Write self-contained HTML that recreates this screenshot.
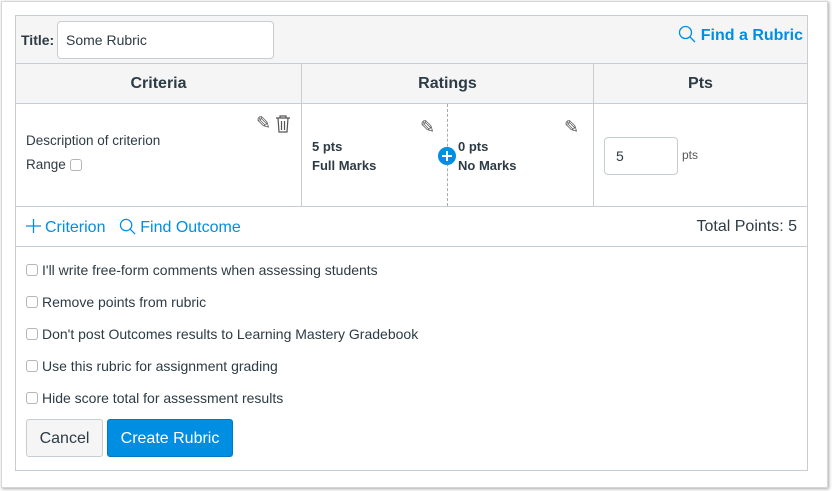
<!DOCTYPE html>
<html><head><style>
*{box-sizing:border-box;margin:0;padding:0}
body{width:834px;height:491px;background:#fff;font-family:"Liberation Sans",sans-serif;color:#2d3b45;position:relative;overflow:hidden}
.win{position:absolute;left:1px;top:1px;width:827px;height:487px;border:1px solid #d6d6d6;box-shadow:1px 1px 3px rgba(0,0,0,.35);background:#fff}
.box{position:absolute;left:15px;top:15px;width:793px;height:456px;border:1px solid #c7cdd1}
.abs{position:absolute}
.hdr{left:0;top:0;width:791px;height:48px;background:#f5f5f5;border-bottom:1px solid #c7cdd1}
.inp{background:#fff;border:1px solid #c7cdd1;border-radius:4px}
.th{top:48px;height:40px;background:#f5f5f5;border-bottom:1px solid #c7cdd1;font-weight:bold;font-size:16px;text-align:center;line-height:40px}
.blue{color:#008ee2}
.cb{display:inline-block;width:12px;height:12px;border:1px solid #b5b5b5;border-radius:3px;background:#fff;vertical-align:middle}
.opt{left:10px;font-size:14px;height:16px;line-height:16px}
.opt .cb{margin-right:4px;vertical-align:-1px}
.b{font-weight:bold;font-size:13px}
</style></head><body>
<div class="win"></div>
<div class="box">
 <div class="abs hdr">
  <div class="abs b" style="left:5px;top:16px;font-size:14px">Title:</div>
  <div class="abs inp" style="left:41px;top:5px;width:217px;height:38px;font-size:14px;padding:10px 0 0 8px">Some Rubric</div>
  <div class="abs blue" style="right:4px;top:9px;font-size:16px;font-weight:bold">
   <svg width="18" height="18" viewBox="0 0 18 18" style="vertical-align:-3px"><circle cx="7.5" cy="7.5" r="6" fill="none" stroke="#008ee2" stroke-width="1.3"/><path d="M12 12l5 5" stroke="#008ee2" stroke-width="1.3"/></svg> Find a Rubric</div>
 </div>
 <div class="abs th" style="left:0;width:286px;border-right:1px solid #c7cdd1">Criteria</div>
 <div class="abs th" style="left:286px;width:292px;border-right:1px solid #c7cdd1">Ratings</div>
 <div class="abs th" style="left:578px;width:213px">Pts</div>
 <div class="abs" style="left:0;top:88px;width:286px;height:103px;border-right:1px solid #c7cdd1;border-bottom:1px solid #c7cdd1">
  <div class="abs" style="left:10px;top:29px;font-size:13.5px">Description of criterion</div>
  <div class="abs" style="left:10px;top:53px;font-size:13.5px">Range <span class="cb"></span></div>
  <div class="abs" style="left:240px;top:9px;font-size:18px;color:#555">✎</div>
  <svg class="abs" style="left:259px;top:11px" width="16" height="18" viewBox="0 0 16 18"><path d="M1 3h14M5 3V1h6v2M3 3l1 14h8l1-14M6.5 6v9M9.5 6v9" fill="none" stroke="#555" stroke-width="1.2"/></svg>
 </div>
 <div class="abs" style="left:286px;top:88px;width:292px;height:103px;border-right:1px solid #c7cdd1;border-bottom:1px solid #c7cdd1">
  <div class="abs" style="left:145px;top:0;height:102px;border-left:1px dashed #aaa"></div>
  <div class="abs b" style="left:10px;top:35px">5 pts</div>
  <div class="abs b" style="left:10px;top:54px">Full Marks</div>
  <div class="abs b" style="left:156px;top:35px">0 pts</div>
  <div class="abs b" style="left:156px;top:54px">No Marks</div>
  <div class="abs" style="left:118px;top:13px;font-size:18px;color:#555">✎</div>
  <div class="abs" style="left:262px;top:13px;font-size:18px;color:#555">✎</div>
  <svg class="abs" style="left:136px;top:43px" width="18" height="18" viewBox="0 0 18 18"><circle cx="9" cy="9" r="9" fill="#008ee2"/><path d="M9 4v10M4 9h10" stroke="#fff" stroke-width="2"/></svg>
 </div>
 <div class="abs" style="left:578px;top:88px;width:213px;height:103px;border-bottom:1px solid #c7cdd1">
  <div class="abs inp" style="left:10px;top:33px;width:74px;height:38px;font-size:14px;padding:10px 0 0 11px">5</div>
  <div class="abs" style="left:88px;top:44px;font-size:12px;color:#555">pts</div>
 </div>
 <div class="abs" style="left:0;top:191px;width:791px;height:40px;border-bottom:1px solid #c7cdd1">
  <div class="abs blue" style="left:9px;top:11px;font-size:16px">
   <svg width="17" height="16" viewBox="0 0 17 16" style="vertical-align:-2px;margin-right:3px"><path d="M8.5 1v14M1 8h15" stroke="#008ee2" stroke-width="1.3"/></svg>Criterion&nbsp;&nbsp;
   <svg width="17" height="17" viewBox="0 0 18 18" style="vertical-align:-3px"><circle cx="7.5" cy="7.5" r="6" fill="none" stroke="#008ee2" stroke-width="1.3"/><path d="M12 12l5 5" stroke="#008ee2" stroke-width="1.3"/></svg> Find Outcome</div>
  <div class="abs" style="right:10px;top:11px;font-size:16px">Total Points: 5</div>
 </div>
 <div class="abs opt" style="top:246px"><span class="cb"></span>I'll write free-form comments when assessing students</div>
 <div class="abs opt" style="top:278px"><span class="cb"></span>Remove points from rubric</div>
 <div class="abs opt" style="top:310px"><span class="cb"></span>Don't post Outcomes results to Learning Mastery Gradebook</div>
 <div class="abs opt" style="top:342px"><span class="cb"></span>Use this rubric for assignment grading</div>
 <div class="abs opt" style="top:374px"><span class="cb"></span>Hide score total for assessment results</div>
 <div class="abs" style="left:10px;top:403px;width:77px;height:38px;background:#f5f5f5;border:1px solid #c7cdd1;border-radius:3px;font-size:16px;text-align:center;line-height:38px">Cancel</div>
 <div class="abs" style="left:91px;top:403px;width:126px;height:38px;background:#008ee2;border:1px solid #0079c1;border-radius:3px;font-size:16px;color:#fff;text-align:center;line-height:38px">Create Rubric</div>
</div>
</body></html>
